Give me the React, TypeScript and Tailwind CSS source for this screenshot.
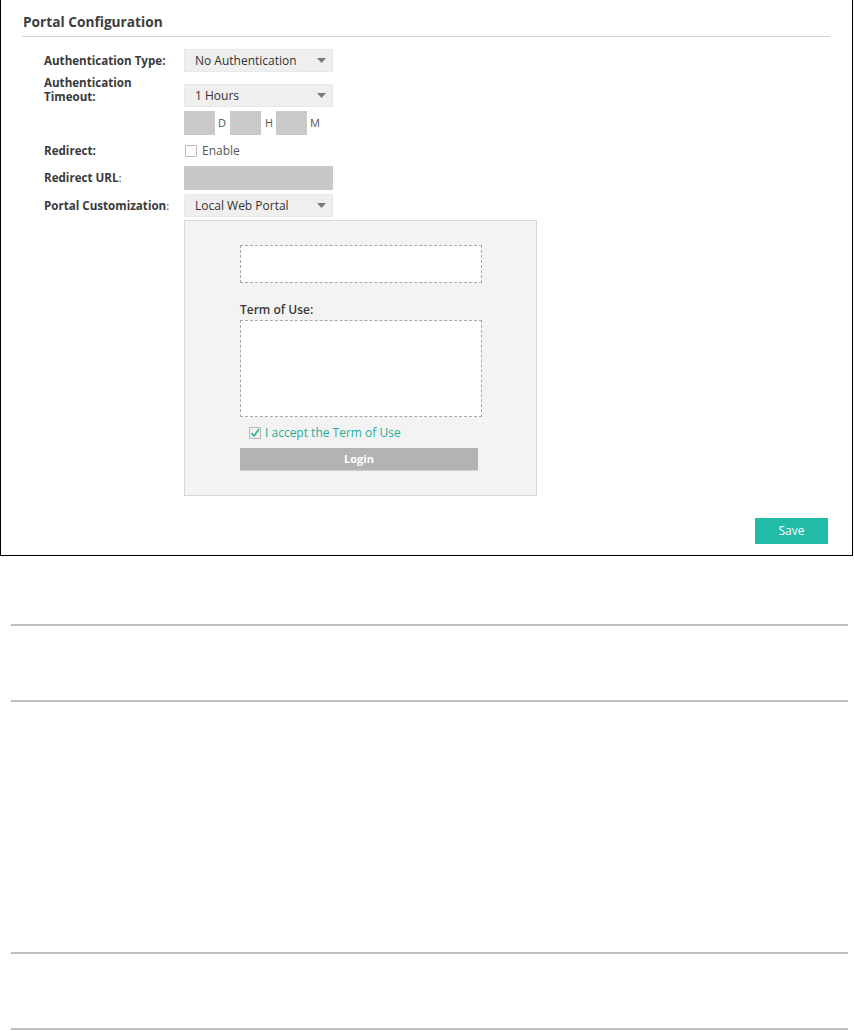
import React from "react";

const font = { fontFamily: '"Open Sans", "Noto Sans", Arial, sans-serif' };

function Arrow() {
  return (
    <svg width="9" height="5" viewBox="0 0 9 5" className="shrink-0">
      <path d="M0 0 L9 0 L4.5 5 Z" fill="#7a7a7a" />
    </svg>
  );
}

function Select({ value }: { value: string }) {
  return (
    <div className="w-[149px] h-[23px] bg-[#efefef] border border-[#e8e8e8] flex items-center justify-between pl-[10px] pr-[6px] text-[12px] text-[#333]">
      <span>{value}</span>
      <Arrow />
    </div>
  );
}

function Row({
  label,
  children,
  className = "",
}: {
  label?: React.ReactNode;
  children: React.ReactNode;
  className?: string;
}) {
  return (
    <div className={`flex items-center ${className}`}>
      <div className="w-[140px] shrink-0 text-[11.6px] font-bold text-[#3a3a3a] leading-[14px]">
        {label}
      </div>
      {children}
    </div>
  );
}

export default function App() {
  return (
    <div className="w-[854px] h-[1031px] bg-white" style={font}>
      {/* Portal Configuration box */}
      <div className="w-[853px] h-[556px] border-x border-b border-black pl-[21px] pr-[22px] flex flex-col">
        <div className="pt-[14px] pb-[6px] pl-[1px] border-b border-[#d4d4d4] text-[13.7px] leading-[16px] font-bold text-[#3d3d3d]">
          Portal Configuration
        </div>

        <div className="pl-[22px] flex flex-col">
          <Row label="Authentication Type:" className="mt-[12px] h-[23px]">
            <Select value="No Authentication" />
          </Row>

          <div className="flex items-start mt-[12px] h-[23px]">
            <div className="w-[140px] shrink-0 -mt-[8px] text-[11.6px] font-bold text-[#3a3a3a] leading-[14px]">
              Authentication
              <br />
              Timeout:
            </div>
            <Select value="1 Hours" />
          </div>

          <Row className="mt-[4px] h-[24px]">
            <div className="flex items-center text-[11px] text-[#555]">
              <div className="w-[31px] h-[24px] bg-[#c9c9c9]" />
              <span className="w-[15px] pl-[3px]">D</span>
              <div className="w-[31px] h-[24px] bg-[#c9c9c9]" />
              <span className="w-[15px] pl-[4px]">H</span>
              <div className="w-[31px] h-[24px] bg-[#c9c9c9]" />
              <span className="pl-[3px]">M</span>
            </div>
          </Row>

          <Row label="Redirect:" className="mt-[4px] h-[24px]">
            <div className="flex items-center gap-[5px] pl-[1px]">
              <div className="w-[12px] h-[12px] border border-[#b8b8b8] bg-white rounded-[1px]" />
              <span className="text-[12px] text-[#555]">Enable</span>
            </div>
          </Row>

          <Row
            label={
              <>
                Redirect URL<span className="font-normal">:</span>
              </>
            }
            className="mt-[3px] h-[24px]"
          >
            <div className="w-[149px] h-[24px] bg-[#c8c8c8]" />
          </Row>

          <Row
            label={
              <>
                Portal Customization<span className="font-normal">:</span>
              </>
            }
            className="mt-[4px] h-[23px]"
          >
            <Select value="Local Web Portal" />
          </Row>

          {/* Portal preview */}
          <div className="flex mt-[3px]">
            <div className="w-[140px] shrink-0" />
            <div className="w-[353px] h-[276px] bg-[#f3f3f3] border border-[#d6d6d6] pl-[55px] pt-[24px] flex flex-col">
              <div className="w-[242px] h-[38px] bg-white border border-dashed border-[#a8a8a8]" />
              <div className="mt-[19px] text-[12px] leading-[16px] font-semibold text-[#3a3a3a]">
                Term of Use:
              </div>
              <div className="mt-[2px] w-[242px] h-[97px] bg-white border border-dashed border-[#a8a8a8]" />
              <div className="mt-[8px] h-[16px] flex items-center pl-[9px] gap-[4px]">
                <div className="w-[12px] h-[12px] border border-[#b8b8b8] bg-[#f0f0f0] flex items-center justify-center">
                  <svg width="10" height="10" viewBox="0 0 10 10">
                    <path d="M1.5 5 L4 8 L9 1" fill="none" stroke="#1fae9a" strokeWidth="1.4" />
                  </svg>
                </div>
                <span className="text-[12px] text-[#1fae9a]">I accept the Term of Use</span>
              </div>
              <div className="mt-[7px] w-[238px] h-[23px] bg-[#b3b3b3] border-b border-[#d0d0d0] flex items-center justify-center text-[11px] font-bold text-white">
                Login
              </div>
            </div>
          </div>
        </div>

        <div className="flex justify-end mt-[22px] pr-[2px]">
          <div className="w-[73px] h-[26px] bg-[#22bba6] flex items-center justify-center text-[12px] text-white">
            Save
          </div>
        </div>
      </div>

      {/* empty sections below */}
      <div className="pl-[11px] pr-[6px]">
        <div className="mt-[68px] h-[2px] bg-[#c0c0c0]" />
        <div className="mt-[74px] h-[2px] bg-[#c0c0c0]" />
        <div className="mt-[250px] h-[2px] bg-[#c0c0c0]" />
        <div className="mt-[74px] h-[2px] bg-[#c0c0c0]" />
      </div>
    </div>
  );
}
